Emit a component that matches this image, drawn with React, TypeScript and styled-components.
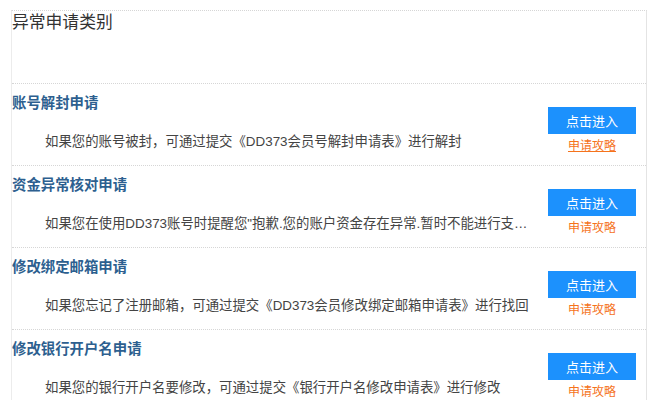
import React from 'react';
import styled, { createGlobalStyle } from 'styled-components';

const Global = createGlobalStyle`
  html, body {
    margin: 0;
    padding: 0;
    background: #fff;
  }
  body {
    font-family: "Liberation Sans", "Noto Sans CJK SC", sans-serif;
    color: #333;
  }
`;

const Box = styled.div`
  width: 636px;
  margin: 10px 0 0 11px;
  box-sizing: border-box;
  border-top: 1px dotted #d6d6d6;
  border-left: 1px solid #ececec;
  border-right: 1px solid #e4e4e4;
`;

const Header = styled.div`
  height: 73px;
  box-sizing: border-box;
  border-bottom: 1px dotted #d6d6d6;
`;

const HeaderTitle = styled.h2`
  margin: 0;
  font-size: 16.8px;
  font-weight: normal;
  line-height: 24px;
  color: #333;
`;

const Row = styled.div`
  display: flex;
  height: 82px;
  box-sizing: border-box;
  border-bottom: 1px dotted #d6d6d6;
`;

const Main = styled.div`
  flex: 1;
  min-width: 0;
  padding-top: 9px;
`;

const RowTitle = styled.h3`
  margin: 0;
  font-size: 14.4px;
  font-weight: bold;
  line-height: 20px;
  color: #2d5f8f;
`;

const Desc = styled.p`
  margin: 19px 0 0;
  padding-left: 33px;
  font-size: 13.4px;
  line-height: 20px;
  color: #444;
  white-space: nowrap;
  overflow: hidden;
  text-overflow: ellipsis;
`;

const Side = styled.div`
  width: 88px;
  margin: 0 10px 0 18px;
  padding-top: 23px;
  display: flex;
  flex-direction: column;
  align-items: center;
`;

const EnterButton = styled.button`
  width: 88px;
  height: 27px;
  border: 0;
  padding: 0;
  background: #1c91fd;
  color: #fff;
  font-family: inherit;
  font-size: 13px;
  cursor: pointer;
`;

const Guide = styled.a<{ $active?: boolean }>`
  margin-top: 4px;
  font-size: 12px;
  line-height: 16px;
  color: #f5731c;
  text-decoration: ${p => (p.$active ? 'underline' : 'none')};
  cursor: pointer;
`;

const items = [
  {
    title: '账号解封申请',
    desc: '如果您的账号被封，可通过提交《DD373会员号解封申请表》进行解封',
  },
  {
    title: '资金异常核对申请',
    desc: '如果您在使用DD373账号时提醒您"抱歉.您的账户资金存在异常.暂时不能进行支付"，可通过提交《资金异常核对申请表》进行核对',
  },
  {
    title: '修改绑定邮箱申请',
    desc: '如果您忘记了注册邮箱，可通过提交《DD373会员修改绑定邮箱申请表》进行找回',
  },
  {
    title: '修改银行开户名申请',
    desc: '如果您的银行开户名要修改，可通过提交《银行开户名修改申请表》进行修改',
  },
];

export default function App() {
  return (
    <>
      <Global />
      <Box>
        <Header>
          <HeaderTitle>异常申请类别</HeaderTitle>
        </Header>
        {items.map((it, i) => (
          <Row key={it.title}>
            <Main>
              <RowTitle>{it.title}</RowTitle>
              <Desc>{it.desc}</Desc>
            </Main>
            <Side>
              <EnterButton>点击进入</EnterButton>
              <Guide $active={i === 0}>申请攻略</Guide>
            </Side>
          </Row>
        ))}
      </Box>
    </>
  );
}
